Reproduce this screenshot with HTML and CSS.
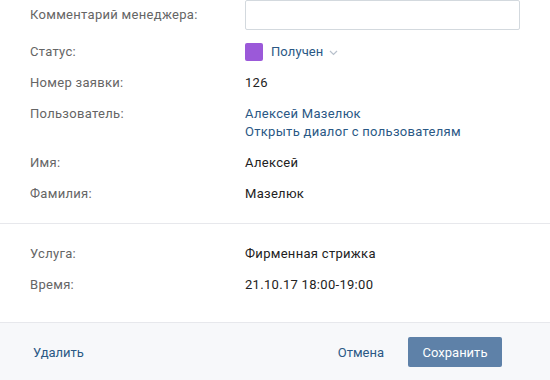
FILE: index.html
```html
<!DOCTYPE html>
<html>
  <head>
    <meta charset="utf-8">
    <title>Заявка</title>
    <link rel="stylesheet" href="styles.css">
  </head>
  <body>
    <div class="box">
      <div class="section">
        <div class="row row-input">
          <div class="label">Комментарий менеджера:</div>
          <div class="value"><input class="field" type="text"></div>
        </div>
        <div class="row">
          <div class="label">Статус:</div>
          <div class="value status">
            <span class="status-color"></span>
            <span class="link">Получен</span>
            <svg class="chevron" width="9" height="6" viewBox="0 0 9 6"><path d="M1 1l3.5 3.5L8 1" fill="none" stroke="#b8c1cc" stroke-width="1.2"/></svg>
          </div>
        </div>
        <div class="row">
          <div class="label">Номер заявки:</div>
          <div class="value">126</div>
        </div>
        <div class="row">
          <div class="label">Пользователь:</div>
          <div class="value">
            <a class="link" href="#">Алексей Мазелюк</a><br>
            <a class="link" href="#">Открыть диалог с пользователям</a>
          </div>
        </div>
        <div class="row">
          <div class="label">Имя:</div>
          <div class="value">Алексей</div>
        </div>
        <div class="row">
          <div class="label">Фамилия:</div>
          <div class="value">Мазелюк</div>
        </div>
      </div>
      <div class="section section-bottom">
        <div class="row">
          <div class="label">Услуга:</div>
          <div class="value">Фирменная стрижка</div>
        </div>
        <div class="row">
          <div class="label">Время:</div>
          <div class="value">21.10.17 18:00-19:00</div>
        </div>
      </div>
      <div class="footer">
        <a class="link" href="#">Удалить</a>
        <div class="actions">
          <a class="link" href="#">Отмена</a>
          <button class="btn">Сохранить</button>
        </div>
      </div>
    </div>
  </body>
</html>
```
FILE: styles.css
```css
* {
  box-sizing: border-box;
}
body {
  margin: 0;
  background: #fff;
  font-family: Roboto, "Liberation Sans", sans-serif;
  font-size: 13px;
  color: #000;
}
.section {
  padding: 0 30px 20px 30px;
  border-bottom: 1px solid #e7e8ec;
  letter-spacing: 0.3px;
}
.section-bottom {
  padding-top: 21px;
  padding-bottom: 28px;
}
.row {
  display: grid;
  grid-template-columns: 215px 1fr;
  line-height: 18px;
  margin-top: 13px;
}
.row:first-child {
  margin-top: 0;
}
.row-input .label {
  align-self: center;
}
.label {
  color: #656565;
}
.value {
  color: #222;
}
.field {
  display: block;
  width: 100%;
  height: 30px;
  border: 1px solid #d3d9de;
  border-radius: 2px;
  padding: 0 8px;
  font: inherit;
}
.status {
  display: flex;
  align-items: center;
}
.status-color {
  width: 18px;
  height: 18px;
  border-radius: 2px;
  background: #9b59d9;
  margin-right: 8px;
}
.status .link {
  letter-spacing: 0.1px;
}
.chevron {
  margin-left: 6px;
  margin-top: 1px;
}
.link {
  color: #2a5885;
  text-decoration: none;
}
.footer {
  display: flex;
  justify-content: space-between;
  align-items: center;
  background: #f7f8fa;
  padding: 14px 48px 13px 33px;
}
.actions {
  display: flex;
  align-items: center;
  gap: 24px;
}
.btn {
  height: 30px;
  width: 94px;
  border: none;
  border-radius: 2px;
  background: #5e81a8;
  color: #fff;
  font: inherit;
  padding: 0;
}
```
